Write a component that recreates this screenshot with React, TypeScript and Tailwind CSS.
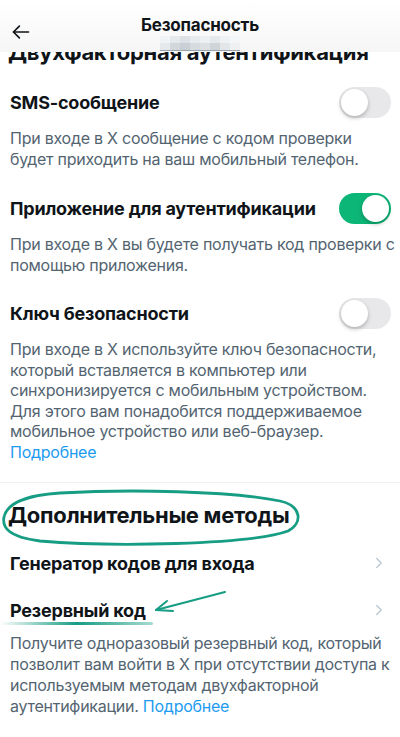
import { ChevronRight } from 'lucide-react'

const Toggle = ({ on }: { on: boolean }) => (
  <div
    className={
      on
        ? 'w-[52px] h-[31px] rounded-full bg-[#0cb677] flex items-center justify-end p-[2px]'
        : 'w-[52px] h-[31px] rounded-full bg-[#e8e8ea] flex items-center justify-start p-[2px]'
    }
  >
    <div className="w-[27px] h-[27px] rounded-full bg-white shadow-[0_2px_4px_rgba(0,0,0,0.25)]" />
  </div>
)

const blur = [
  ['#f2f3f4', '#e6e9ec', '#dde1e5', '#e8ebee', '#eef0f2', '#e6e9ec', '#eff1f3', '#f5f6f7'],
  ['#e6e9ec', '#d2d7dc', '#c9cfd5', '#d6dbdf', '#dce0e3', '#cfd4d9', '#e3e6e9', '#eef0f2'],
]

const App = () => {
  return (
    <div className="relative w-[400px] h-[737px] overflow-hidden bg-white text-[#0f1419] font-['Inter',sans-serif]">
      {/* header over the scrolled list */}
      <div className="absolute top-0 left-0 right-0 h-[52px] bg-gradient-to-b from-white to-[#f6f6f6] z-10">
        <div className="absolute left-[11px] top-[22px]">
          <svg width="20" height="20" viewBox="0 0 24 24" fill="none" stroke="#0f1419" strokeWidth="2" strokeLinecap="round" strokeLinejoin="round">
            <path d="M21 12H3" />
            <path d="M10 5l-7 7 7 7" />
          </svg>
        </div>
        <div className="flex flex-col items-center pt-[14px]">
          <div className="text-[17px] leading-[22px] font-bold tracking-[-0.2px]">Безопасность</div>
          <div className="flex flex-col">
            {blur.map((row, i) => (
              <div key={i} className="flex">
                {row.map((c, j) => (
                  <div key={j} className="w-[10px] h-[7px]" style={{ backgroundColor: c }} />
                ))}
              </div>
            ))}
          </div>
          <div className="w-[80px] h-px bg-[#9aa3ab]" />
        </div>
      </div>

      <div className="pt-[38px]">
        <h2 className="px-[8px] text-[22px] leading-[28px] font-bold tracking-[-0.3px] whitespace-nowrap">
          Двухфакторная аутентификация
        </h2>

        <div className="px-[10px] pr-[9px] mt-[21px]">
          <div className="flex items-center justify-between">
            <div className="text-[18px] font-bold tracking-[-0.2px]">SMS-сообщение</div>
            <Toggle on={false} />
          </div>
          <p className="mt-[10px] text-[16px] leading-[20.5px] text-[#536471] tracking-[-0.25px] whitespace-nowrap">
            При входе в X сообщение с кодом проверки
            <br />
            будет приходить на ваш мобильный телефон.
          </p>

          <div className="flex items-center justify-between mt-[24px]">
            <div className="text-[18px] font-bold tracking-[-0.2px]">Приложение для аутентификации</div>
            <Toggle on={true} />
          </div>
          <p className="mt-[10px] text-[16px] leading-[20.5px] text-[#536471] tracking-[-0.25px] whitespace-nowrap">
            При входе в X вы будете получать код проверки с
            <br />
            помощью приложения.
          </p>

          <div className="flex items-center justify-between mt-[23px]">
            <div className="text-[18px] font-bold tracking-[-0.2px]">Ключ безопасности</div>
            <Toggle on={false} />
          </div>
          <p className="mt-[10px] text-[16px] leading-[20.5px] text-[#536471] tracking-[-0.25px] whitespace-nowrap">
            При входе в X используйте ключ безопасности,
            <br />
            который вставляется в компьютер или
            <br />
            синхронизируется с мобильным устройством.
            <br />
            Для этого вам понадобится поддерживаемое
            <br />
            мобильное устройство или веб-браузер.
            <br />
            <span className="text-[#1d9bf0]">Подробнее</span>
          </p>
        </div>

        <div className="mt-[20px] h-px bg-[#eff3f4]" />

        <div className="relative mt-[17px] px-[8px]">
          <svg className="absolute left-0 top-[-12px]" width="304" height="60" viewBox="0 0 304 60" fill="none">
            <path
              d="M60 5 C130 1 230 3 280 13 C302 18 303 35 288 43 C250 57 110 59 40 53 C8 49 2 39 4 29 C7 15 28 7 60 5 Z"
              stroke="#169d83"
              strokeWidth="2.8"
              strokeLinecap="round"
            />
          </svg>
          <h2 className="relative text-[22px] leading-[30px] font-bold tracking-[-0.3px] whitespace-nowrap">
            Дополнительные методы
          </h2>
        </div>

        <div className="px-[10px] pr-[12px]">
          <div className="flex items-center justify-between mt-[19px] h-[28px]">
            <div className="text-[18px] font-bold tracking-[-0.2px]">Генератор кодов для входа</div>
            <ChevronRight size={18} strokeWidth={1.6} className="text-[#b9c4cd]" />
          </div>
          <div className="relative flex items-center justify-between mt-[19px] h-[28px]">
            <div className="text-[18px] font-bold tracking-[-0.2px]">Резервный код</div>
            <ChevronRight size={18} strokeWidth={1.6} className="text-[#b9c4cd]" />
            <div className="absolute left-[-10px] top-[26px] w-[153px] h-[2.5px] rounded-full bg-gradient-to-r from-[#169d8300] via-[#169d83] to-[#169d8360]" />
            <svg className="absolute left-[135px] top-[-6px]" width="90" height="30" viewBox="0 0 90 30" fill="none" stroke="#169d83" strokeWidth="2" strokeLinecap="round" strokeLinejoin="round">
              <path d="M80 2 L11 20" />
              <path d="M22 11 L11 20 L28 21" />
            </svg>
          </div>
          <p className="mt-[9px] text-[16px] leading-[21px] text-[#536471] tracking-[-0.25px] whitespace-nowrap">
            Получите одноразовый резервный код, который
            <br />
            позволит вам войти в X при отсутствии доступа к
            <br />
            используемым методам двухфакторной
            <br />
            аутентификации. <span className="text-[#1d9bf0]">Подробнее</span>
          </p>
        </div>
      </div>
    </div>
  )
}

export default App
